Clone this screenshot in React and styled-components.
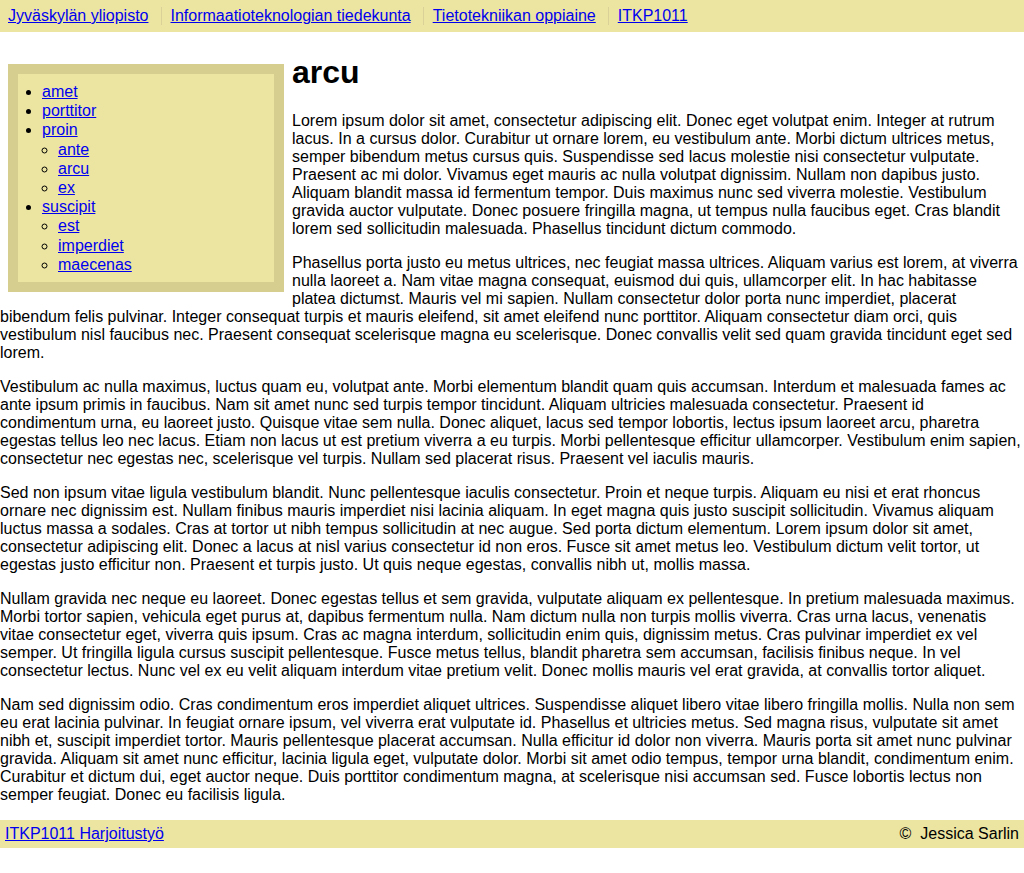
import React from 'react';
import styled, { createGlobalStyle } from 'styled-components';

const Global = createGlobalStyle`
  body {
    margin: 0;
    background: #fff;
    color: #000;
    font-family: 'Liberation Sans', Arial, sans-serif;
    font-size: 16px;
  }
  a {
    color: #0000ee;
  }
`;

const Header = styled.nav`
  background: #ece5a2;
  padding: 7px 0;
`;

const Crumbs = styled.ul`
  display: flex;
  margin: 0;
  padding: 0;
  list-style: none;
`;

const Crumb = styled.li`
  padding: 0 8px;
  & + & {
    margin-left: 4px;
    border-left: 1px solid #d9d198;
    padding-left: 9px;
  }
`;

const Main = styled.main`
  display: flow-root;
`;

const Sidebar = styled.aside`
  float: left;
  width: 256px;
  margin: 32px 8px 8px 8px;
  border: 10px solid #d5ce8e;
  background: #ece5a2;
`;

const Menu = styled.ul`
  margin: ${(p) => (p.$nested ? '0' : '8px 0')};
  padding-left: ${(p) => (p.$nested ? '16px' : '24px')};
  list-style-type: ${(p) => (p.$nested ? 'circle' : 'disc')};
  line-height: 1.2;
`;

const Title = styled.h1`
  margin: 22px 0 21px;
  font-size: 32px;
  font-weight: 700;
`;

const Para = styled.p`
  margin: 16px 0;
  line-height: 18px;
`;

const Footer = styled.footer`
  display: flex;
  justify-content: space-between;
  background: #ece5a2;
  padding: 5px;
`;

const menu = [
  { name: 'amet' },
  { name: 'porttitor' },
  { name: 'proin', children: ['ante', 'arcu', 'ex'] },
  { name: 'suscipit', children: ['est', 'imperdiet', 'maecenas'] },
];

const paragraphs = [
  'Lorem ipsum dolor sit amet, consectetur adipiscing elit. Donec eget volutpat enim. Integer at rutrum lacus. In a cursus dolor. Curabitur ut ornare lorem, eu vestibulum ante. Morbi dictum ultrices metus, semper bibendum metus cursus quis. Suspendisse sed lacus molestie nisi consectetur vulputate. Praesent ac mi dolor. Vivamus eget mauris ac nulla volutpat dignissim. Nullam non dapibus justo. Aliquam blandit massa id fermentum tempor. Duis maximus nunc sed viverra molestie. Vestibulum gravida auctor vulputate. Donec posuere fringilla magna, ut tempus nulla faucibus eget. Cras blandit lorem sed sollicitudin malesuada. Phasellus tincidunt dictum commodo.',
  'Phasellus porta justo eu metus ultrices, nec feugiat massa ultrices. Aliquam varius est lorem, at viverra nulla laoreet a. Nam vitae magna consequat, euismod dui quis, ullamcorper elit. In hac habitasse platea dictumst. Mauris vel mi sapien. Nullam consectetur dolor porta nunc imperdiet, placerat bibendum felis pulvinar. Integer consequat turpis et mauris eleifend, sit amet eleifend nunc porttitor. Aliquam consectetur diam orci, quis vestibulum nisl faucibus nec. Praesent consequat scelerisque magna eu scelerisque. Donec convallis velit sed quam gravida tincidunt eget sed lorem.',
  'Vestibulum ac nulla maximus, luctus quam eu, volutpat ante. Morbi elementum blandit quam quis accumsan. Interdum et malesuada fames ac ante ipsum primis in faucibus. Nam sit amet nunc sed turpis tempor tincidunt. Aliquam ultricies malesuada consectetur. Praesent id condimentum urna, eu laoreet justo. Quisque vitae sem nulla. Donec aliquet, lacus sed tempor lobortis, lectus ipsum laoreet arcu, pharetra egestas tellus leo nec lacus. Etiam non lacus ut est pretium viverra a eu turpis. Morbi pellentesque efficitur ullamcorper. Vestibulum enim sapien, consectetur nec egestas nec, scelerisque vel turpis. Nullam sed placerat risus. Praesent vel iaculis mauris.',
  'Sed non ipsum vitae ligula vestibulum blandit. Nunc pellentesque iaculis consectetur. Proin et neque turpis. Aliquam eu nisi et erat rhoncus ornare nec dignissim est. Nullam finibus mauris imperdiet nisi lacinia aliquam. In eget magna quis justo suscipit sollicitudin. Vivamus aliquam luctus massa a sodales. Cras at tortor ut nibh tempus sollicitudin at nec augue. Sed porta dictum elementum. Lorem ipsum dolor sit amet, consectetur adipiscing elit. Donec a lacus at nisl varius consectetur id non eros. Fusce sit amet metus leo. Vestibulum dictum velit tortor, ut egestas justo efficitur non. Praesent et turpis justo. Ut quis neque egestas, convallis nibh ut, mollis massa.',
  'Nullam gravida nec neque eu laoreet. Donec egestas tellus et sem gravida, vulputate aliquam ex pellentesque. In pretium malesuada maximus. Morbi tortor sapien, vehicula eget purus at, dapibus fermentum nulla. Nam dictum nulla non turpis mollis viverra. Cras urna lacus, venenatis vitae consectetur eget, viverra quis ipsum. Cras ac magna interdum, sollicitudin enim quis, dignissim metus. Cras pulvinar imperdiet ex vel semper. Ut fringilla ligula cursus suscipit pellentesque. Fusce metus tellus, blandit pharetra sem accumsan, facilisis finibus neque. In vel consectetur lectus. Nunc vel ex eu velit aliquam interdum vitae pretium velit. Donec mollis mauris vel erat gravida, at convallis tortor aliquet.',
  'Nam sed dignissim odio. Cras condimentum eros imperdiet aliquet ultrices. Suspendisse aliquet libero vitae libero fringilla mollis. Nulla non sem eu erat lacinia pulvinar. In feugiat ornare ipsum, vel viverra erat vulputate id. Phasellus et ultricies metus. Sed magna risus, vulputate sit amet nibh et, suscipit imperdiet tortor. Mauris pellentesque placerat accumsan. Nulla efficitur id dolor non viverra. Mauris porta sit amet nunc pulvinar gravida. Aliquam sit amet nunc efficitur, lacinia ligula eget, vulputate dolor. Morbi sit amet odio tempus, tempor urna blandit, condimentum enim. Curabitur et dictum dui, eget auctor neque. Duis porttitor condimentum magna, at scelerisque nisi accumsan sed. Fusce lobortis lectus non semper feugiat. Donec eu facilisis ligula.',
];

const crumbs = [
  'Jyväskylän yliopisto',
  'Informaatioteknologian tiedekunta',
  'Tietotekniikan oppiaine',
  'ITKP1011',
];

export default function App() {
  return (
    <>
      <Global />
      <Header>
        <Crumbs>
          {crumbs.map((c) => (
            <Crumb key={c}>
              <a href="#">{c}</a>
            </Crumb>
          ))}
        </Crumbs>
      </Header>
      <Main>
        <Sidebar>
          <Menu>
            {menu.map((item) => (
              <li key={item.name}>
                <a href="#">{item.name}</a>
                {item.children && (
                  <Menu $nested>
                    {item.children.map((child) => (
                      <li key={child}>
                        <a href="#">{child}</a>
                      </li>
                    ))}
                  </Menu>
                )}
              </li>
            ))}
          </Menu>
        </Sidebar>
        <Title>arcu</Title>
        {paragraphs.map((text, i) => (
          <Para key={i}>{text}</Para>
        ))}
      </Main>
      <Footer>
        <a href="#">ITKP1011 Harjoitustyö</a>
        <span>©&nbsp; Jessica Sarlin</span>
      </Footer>
    </>
  );
}
